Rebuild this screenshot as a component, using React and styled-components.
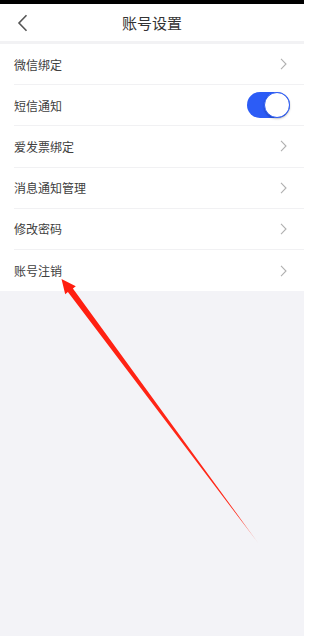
import React from "react";
import styled, { createGlobalStyle } from "styled-components";

const Global = createGlobalStyle`
  html, body { margin: 0; padding: 0; background: #ffffff; }
  body { font-family: "Noto Sans CJK SC", "Noto Sans", sans-serif; }
`;

const Screen = styled.div`
  position: relative;
  width: 304px;
  height: 636px;
  display: flex;
  flex-direction: column;
  background: #f3f3f7;
  overflow: hidden;
`;

const StatusBar = styled.div`
  height: 4px;
  background: #000;
  flex: none;
`;

const Header = styled.div`
  height: 37px;
  flex: none;
  background: #fff;
  display: flex;
  align-items: center;
  justify-content: center;
  position: relative;
  border-bottom: 3px solid #f2f2f4;
`;

const BackButton = styled.div`
  position: absolute;
  left: 16px;
  top: 10px;
  width: 14px;
  height: 18px;
  display: flex;
`;

const Title = styled.div`
  font-size: 15px;
  color: #333;
  line-height: 1;
`;

const List = styled.div`
  background: #fff;
  flex: none;
`;

const Row = styled.div`
  margin-left: 14px;
  padding-right: 16px;
  display: flex;
  align-items: center;
  justify-content: space-between;
  border-bottom: ${(p) => (p.$last ? "none" : "1px solid #f1f1f3")};
  height: ${(p) => (p.$last ? "41.2px" : "40.2px")};
`;

const Label = styled.div`
  font-size: 12px;
  color: #404040;
  line-height: 1;
  padding-top: 1px;
`;

const Chevron = styled.svg`
  width: 7px;
  height: 12px;
  margin-right: 1px;
`;

const Toggle = styled.div`
  width: 43px;
  height: 26px;
  border-radius: 13px;
  background: #2c5cf6;
  position: relative;
  margin-right: -2px;
`;

const Knob = styled.div`
  position: absolute;
  right: 0;
  top: 0;
  width: 24px;
  height: 24px;
  border-radius: 50%;
  background: #fff;
  border: 1px solid #2c5cf6;
  box-shadow: 0 1px 2px rgba(0, 0, 0, 0.25);
`;

const Fill = styled.div`
  flex: 1;
  background: #f3f3f7;
`;

const Annotation = styled.svg`
  position: absolute;
  left: 0;
  top: 0;
  width: 304px;
  height: 636px;
  pointer-events: none;
`;

const items = [
  { label: "微信绑定" },
  { label: "短信通知", toggle: true },
  { label: "爱发票绑定" },
  { label: "消息通知管理" },
  { label: "修改密码" },
  { label: "账号注销" },
];

function ChevronIcon() {
  return (
    <Chevron viewBox="0 0 7 12">
      <path d="M1 0.8 L6 6 L1 11.2" fill="none" stroke="#b0b0b0" strokeWidth="1.1" />
    </Chevron>
  );
}

export default function App() {
  return (
    <>
      <Global />
      <Screen>
        <StatusBar />
        <Header>
          <BackButton>
            <svg width="14" height="18" viewBox="0 0 14 18">
              <path d="M10.5 1.2 L3 9 L10.5 16.8" fill="none" stroke="#555" strokeWidth="1.6" />
            </svg>
          </BackButton>
          <Title>账号设置</Title>
        </Header>
        <List>
          {items.map((it, i) => (
            <Row key={it.label} $last={i === items.length - 1}>
              <Label>{it.label}</Label>
              {it.toggle ? (
                <Toggle>
                  <Knob />
                </Toggle>
              ) : (
                <ChevronIcon />
              )}
            </Row>
          ))}
        </List>
        <Fill />
        <Annotation viewBox="0 0 304 636">
          <defs>
            <linearGradient id="fade" gradientUnits="userSpaceOnUse" x1="62" y1="279" x2="258" y2="543">
              <stop offset="0" stopColor="#ff1e10" />
              <stop offset="0.9" stopColor="#ff2a1a" />
              <stop offset="1" stopColor="#ff2a1a" stopOpacity="0.2" />
            </linearGradient>
          </defs>
          <polygon
            points="61.5,279 75.8,286.2 72.9,288.4 258.5,543.5 67.9,292 65.2,294.3"
            fill="url(#fade)"
          />
        </Annotation>
      </Screen>
    </>
  );
}
